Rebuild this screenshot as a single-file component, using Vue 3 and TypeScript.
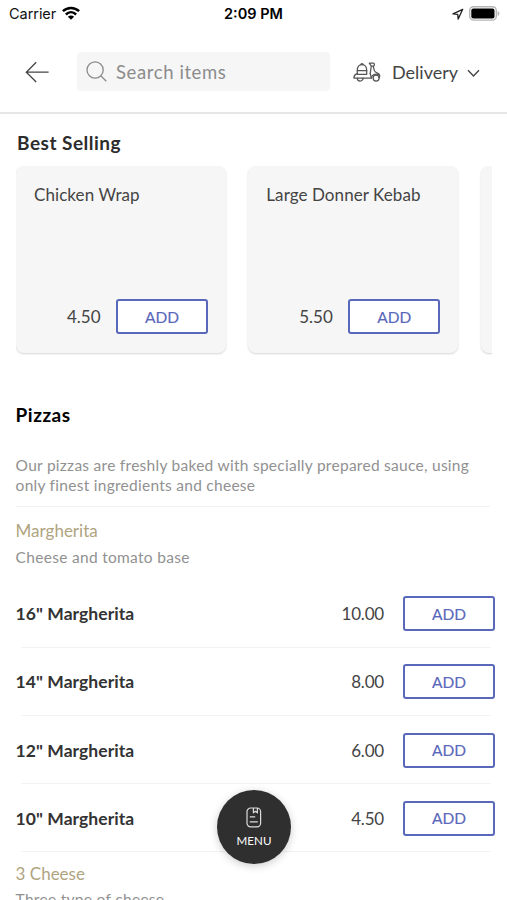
<script setup lang="ts">
interface Dish {
  name: string
  price: string
}

const bestSelling: Dish[] = [
  { name: 'Chicken Wrap', price: '4.50' },
  { name: 'Large Donner Kebab', price: '5.50' },
]

const margheritas: Dish[] = [
  { name: '16" Margherita', price: '10.00' },
  { name: '14" Margherita', price: '8.00' },
  { name: '12" Margherita', price: '6.00' },
  { name: '10" Margherita', price: '4.50' },
]
</script>

<template>
  <div class="screen">
    <div class="status">
      <div class="carrier">
        <span>Carrier</span>
        <svg class="wifi" viewBox="0 0 18 14" width="18" height="14">
          <g fill="none" stroke="#000" stroke-width="2.5">
            <path d="M.9 5.2C5.5.9 12.5.9 17.1 5.2" />
            <path d="M3.9 8.5c3-2.9 7.2-2.9 10.2 0" />
          </g>
          <path d="M9 13.800 5.900 10.800c1.800-1.600 4.400-1.600 6.200 0z" />
        </svg>
      </div>
      <span class="time">2:09 PM</span>
      <div class="indicators">
        <svg viewBox="0 0 12 12" width="12" height="12">
          <path d="M10.700 1.300 1 5.900l4.700.5.500 4.700z" fill="none" stroke="#222" stroke-width="1.300" stroke-linejoin="round" />
        </svg>
        <svg viewBox="0 0 31 15" width="31" height="15">
          <rect x=".7" y=".7" width="26.600" height="13.400" rx="3.800" fill="#fff" stroke="#b5b5b5" stroke-width="1.400" />
          <rect x="2.300" y="2.400" width="23.200" height="10" rx="2" fill="#000" />
          <path d="M28.600 5v5c1.200-.5 1.800-1.400 1.800-2.500S29.800 5.500 28.600 5z" fill="#b5b5b5" />
        </svg>
      </div>
    </div>

    <header class="toolbar">
      <svg class="back" viewBox="0 0 25 22" width="25" height="22">
        <path d="M23.600 11.200H1.300M11.200 1.200 1.300 11.200l9.900 9.800" fill="none" stroke="#444" stroke-width="1.300" />
      </svg>
      <div class="search">
        <svg viewBox="0 0 21 21" width="21" height="21">
          <g fill="none" stroke="#8c8c8c" stroke-width="1.300">
            <circle cx="9.100" cy="9" r="8.100" />
            <path d="m14.800 14.800 5.500 5.500" />
          </g>
        </svg>
        <span>Search items</span>
      </div>
      <div class="mode">
        <svg viewBox="0 0 28 20" width="28" height="20">
          <g fill="none" stroke="#555" stroke-width="1.250" stroke-linejoin="round" stroke-linecap="round">
            <path d="M4.300 8.700C4.300 4.700 6 2.700 9 2.700s4.700 2 4.700 6z" />
            <path d="M7.800 2.700c0-1.300 2.400-1.300 2.400 0" />
            <path d="M4.300 8.700v2.700C2 12.400.9 13.800.9 16h3.400M13.700 8.700v3.600H4.300M10.200 16h8.200l-1.200-4.300" />
            <path d="M4.200 16a3 3 0 0 0 6 0z" />
            <path d="M16.300 1.200h3.900c1.600 0 1.600 2.900 0 2.900h-1.900zM20.200 4.100l1.200 4.600c.8 2.800 4.700 1.700 5.300 4.600.2.900 0 1.700-.7 2.400M18.300 4.100l-1.100 7.600" />
            <path d="M18.400 16c.3-3.200 4-5.100 7.400-3.200" />
            <circle cx="23.100" cy="16" r="3" />
          </g>
        </svg>
        <span>Delivery</span>
        <svg class="chevron" viewBox="0 0 13 9" width="13" height="9">
          <path d="m1 1.300 5.500 5.700L12 1.300" fill="none" stroke="#444" stroke-width="1.400" />
        </svg>
      </div>
    </header>

    <main>
      <section class="best">
        <h2>Best Selling</h2>
        <div class="carousel">
          <article v-for="dish in bestSelling" :key="dish.name" class="card">
            <span class="card-name">{{ dish.name }}</span>
            <div class="card-foot">
              <span class="price">{{ dish.price }}</span>
              <button class="add">ADD</button>
            </div>
          </article>
          <article class="card"></article>
        </div>
      </section>

      <section class="category">
        <h2>Pizzas</h2>
        <p class="about">Our pizzas are freshly baked with specially prepared sauce, using<br />only finest ingredients and cheese</p>
        <div class="group">
          <h3>Margherita</h3>
          <p class="note">Cheese and tomato base</p>
        </div>
        <div v-for="dish in margheritas" :key="dish.name" class="row">
          <span class="row-name">{{ dish.name }}</span>
          <span class="price">{{ dish.price }}</span>
          <button class="add">ADD</button>
        </div>
        <div class="group last">
          <h3>3 Cheese</h3>
          <p class="note">Three type of cheese</p>
        </div>
      </section>
    </main>

    <button class="menu">
      <svg viewBox="0 0 16 21" width="16" height="21">
        <g fill="none" stroke="#ddd" stroke-width="1.200" stroke-linejoin="round">
          <rect x="1" y="1" width="13.600" height="18.800" rx="3.600" />
          <path d="M7.400 1v4.800l2-1.500 2 1.500V1M3.800 9.900h5.400M3.800 14.900h8" />
        </g>
      </svg>
      <span>MENU</span>
    </button>
  </div>
</template>

<style>
body {
  margin: 0;
  background: #fff;
}
</style>

<style scoped>
.screen {
  position: relative;
  width: 507px;
  height: 900px;
  overflow: hidden;
  background: #fff;
  color: #444;
  font-family: Lato, "Liberation Sans", sans-serif;
}
h2, h3, p {
  margin: 0;
}
button {
  font-family: inherit;
  padding: 0;
}
.status {
  display: grid;
  grid-template-columns: 1fr auto 1fr;
  align-items: center;
  height: 27px;
  padding: 0 7px 0 9px;
  box-sizing: border-box;
  font-family: Inter, "Liberation Sans", sans-serif;
  font-size: 14.500px;
  color: #111;
}
.carrier, .indicators {
  display: flex;
  align-items: center;
}
.carrier {
  gap: 5.500px;
  letter-spacing: -0.050px;
}
.wifi {
  margin-top: -2px;
}
.time {
  margin-left: -2px;
  font-weight: 600;
  color: #000;
}
.indicators {
  justify-content: flex-end;
  gap: 5px;
}
.toolbar {
  display: flex;
  align-items: center;
  height: 87px;
  padding: 4px 27px 0 25px;
  box-sizing: border-box;
  border-bottom: 2px solid #e6e6e6;
}
.toolbar svg {
  flex: none;
}
.search {
  display: flex;
  align-items: center;
  gap: 9px;
  width: 253px;
  height: 39px;
  margin-left: 27px;
  padding-left: 9px;
  box-sizing: border-box;
  border-radius: 4px;
  background: #f6f6f6;
  color: #8c8c8c;
  font-size: 18.500px;
  letter-spacing: 0.600px;
}
.mode {
  display: flex;
  align-items: center;
  flex: 1;
  margin-left: 23px;
  font-size: 18px;
}
.mode span {
  margin-left: 11px;
}
.chevron {
  margin: 3px 0 0 auto;
}
.best {
  padding: 17px 15px 0 16px;
}
h2 {
  font-size: 19px;
  line-height: 24px;
  font-weight: 700;
  letter-spacing: 0.500px;
  color: #2c2c2c;
}
.best h2 {
  padding-left: 1px;
}
.carousel {
  display: flex;
  gap: 22.300px;
  margin-top: 11px;
  padding-bottom: 4px;
  overflow: hidden;
}
.card {
  flex: none;
  display: flex;
  flex-direction: column;
  justify-content: space-between;
  width: 210px;
  height: 187px;
  padding: 19px 18px 19px;
  box-sizing: border-box;
  border-radius: 8px;
  background: #f6f6f6;
  box-shadow: 0 1px 2px rgba(0, 0, 0, 0.170);
}
.card-name {
  font-size: 17px;
  line-height: 20px;
  letter-spacing: 0.080px;
}
.card-foot {
  display: flex;
  align-items: center;
  justify-content: flex-end;
}
.price {
  font-size: 17px;
}
.add {
  width: 92px;
  height: 35px;
  border: 2px solid #5968bb;
  border-radius: 3px;
  background: #fff;
  color: #5968bb;
  font-size: 15.500px;
  -webkit-text-stroke: 0.150px #5968bb;
}
.card .add {
  margin-left: 15.500px;
}
.category {
  padding: 46px 12px 0 15.600px;
}
.category h2 {
  color: #000;
}
.about {
  margin-top: 28px;
  padding-bottom: 11px;
  margin-right: 5px;
  border-bottom: 1px solid #f2f2f2;
  font-size: 15.500px;
  line-height: 20px;
  letter-spacing: 0.270px;
  color: #919191;
}
.group {
  height: 60.700px;
  padding-top: 12px;
}
.group.last {
  padding-top: 10px;
}
h3 {
  font-size: 17px;
  line-height: 24px;
  font-weight: 400;
  color: #b0a47f;
}
.note {
  margin-top: 4px;
  font-size: 15.500px;
  line-height: 20px;
  letter-spacing: 0.300px;
  color: #919191;
}
.group.last .note {
  margin-top: 3px;
}
.row {
  display: flex;
  align-items: center;
  height: 68.150px;
  background: linear-gradient(#f2f2f2, #f2f2f2) 5px 100% / 470px 1px no-repeat;
}
.row-name {
  flex: 1;
  font-size: 17.500px;
  font-weight: 700;
  letter-spacing: 0.050px;
  color: #333;
}
.row .price {
  letter-spacing: -0.200px;
}
.row .add {
  margin-left: 19px;
}
.menu {
  position: absolute;
  left: 217px;
  top: 790px;
  display: flex;
  flex-direction: column;
  align-items: center;
  gap: 6px;
  width: 74px;
  height: 74px;
  padding-top: 17px;
  border: 0;
  border-radius: 50%;
  background: #2f2f2f;
  box-shadow: 0 2px 8px rgba(0, 0, 0, 0.200);
  color: #fff;
  font-size: 11.600px;
}
</style>
